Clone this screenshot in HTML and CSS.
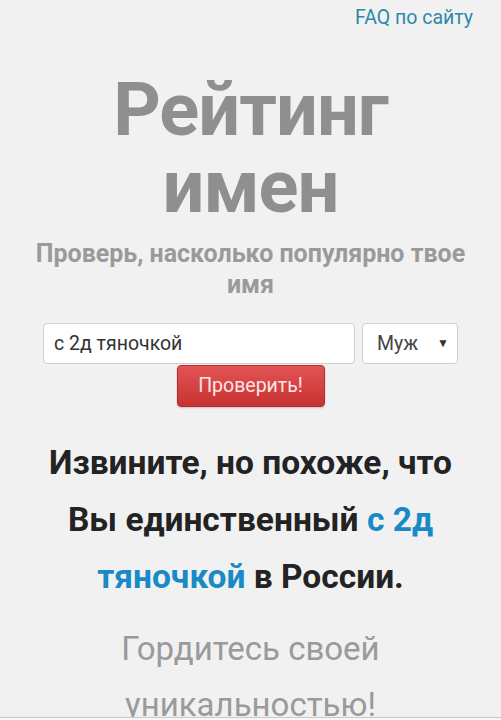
FILE: index.html
```html
<!DOCTYPE html>
<html lang="ru">
<head>
<meta charset="utf-8">
<title>Рейтинг имен</title>
<link rel="stylesheet" href="styles.css">
</head>
<body>
<div class="page">
  <div class="top"><a class="faq" href="#">FAQ по сайту</a></div>
  <h1 class="title">Рейтинг<br>имен</h1>
  <p class="subtitle">Проверь, насколько популярно твое имя</p>
  <form class="form">
    <div class="row">
      <input class="name" type="text" value="с 2д тяночкой">
      <div class="select"><span>Муж</span><span class="arrow">▼</span></div>
    </div>
    <button class="btn" type="button">Проверить!</button>
  </form>
  <p class="result">Извините, но похоже, что Вы единственный <span class="hl">с 2д тяночкой</span> в России.</p>
  <p class="pride">Гордитесь своей уникальностью!</p>
</div>
<div class="bottombar"></div>
</body>
</html>
```

FILE: styles.css
```css
html, body {
  margin: 0;
  padding: 0;
}
body {
  background: #f1f1f1;
  font-family: Roboto, "Noto Sans", "Liberation Sans", sans-serif;
  overflow: hidden;
  height: 720px;
}
.page {
  display: flex;
  flex-direction: column;
  align-items: center;
  text-align: center;
}
.top {
  align-self: stretch;
  text-align: right;
  padding: 7px 28px 0 0;
  font-size: 19.5px;
  line-height: 22px;
}
.faq {
  color: #2b8aa9;
  text-decoration: none;
}
.title {
  margin: 42px 0 0;
  font-size: 74px;
  line-height: 77px;
  font-weight: 700;
  color: #8f8f8f;
  letter-spacing: -1px;
}
.subtitle {
  margin: 12.5px 0 0;
  padding: 0 20px;
  font-size: 25px;
  line-height: 31px;
  font-weight: 700;
  color: #9a9a9a;
}
.form {
  margin-top: 23px;
  display: flex;
  flex-direction: column;
  align-items: center;
}
.row {
  display: flex;
  gap: 7px;
}
.name {
  box-sizing: border-box;
  width: 312px;
  height: 41px;
  border: 1px solid #cfcfcf;
  border-radius: 4px;
  background: #fff;
  padding: 0 10px;
  font-family: inherit;
  font-size: 19.5px;
  color: #333;
  outline: none;
}
.select {
  box-sizing: border-box;
  width: 96px;
  height: 41px;
  border: 1px solid #cfcfcf;
  border-radius: 4px;
  background: #fff;
  display: flex;
  align-items: center;
  justify-content: space-between;
  padding: 0 8px 0 14px;
  font-size: 19.5px;
  color: #444;
}
.arrow {
  font-size: 12px;
  color: #333;
}
.btn {
  margin-top: 1px;
  width: 148px;
  height: 42px;
  border: 1px solid #b52a2a;
  border-radius: 4px;
  background: linear-gradient(#e35454, #c83131);
  box-shadow: 0 1px 2px rgba(0,0,0,0.2);
  color: #fbe6e6;
  font-family: inherit;
  font-size: 19.5px;
  padding: 0;
}
.result {
  margin: 27px 0 0;
  max-width: 430px;
  font-size: 33.5px;
  line-height: 57px;
  font-weight: 700;
  color: #232323;
}
.hl {
  color: #1a8ac7;
}
.pride {
  margin: 16px 0 0;
  font-size: 33px;
  line-height: 56px;
  color: #9a9a9a;
}
.bottombar {
  position: fixed;
  left: 0;
  right: 0;
  bottom: 0;
  height: 2px;
  border-top: 1px solid #c8c8c8;
  background: #f8f8f8;
}
```
